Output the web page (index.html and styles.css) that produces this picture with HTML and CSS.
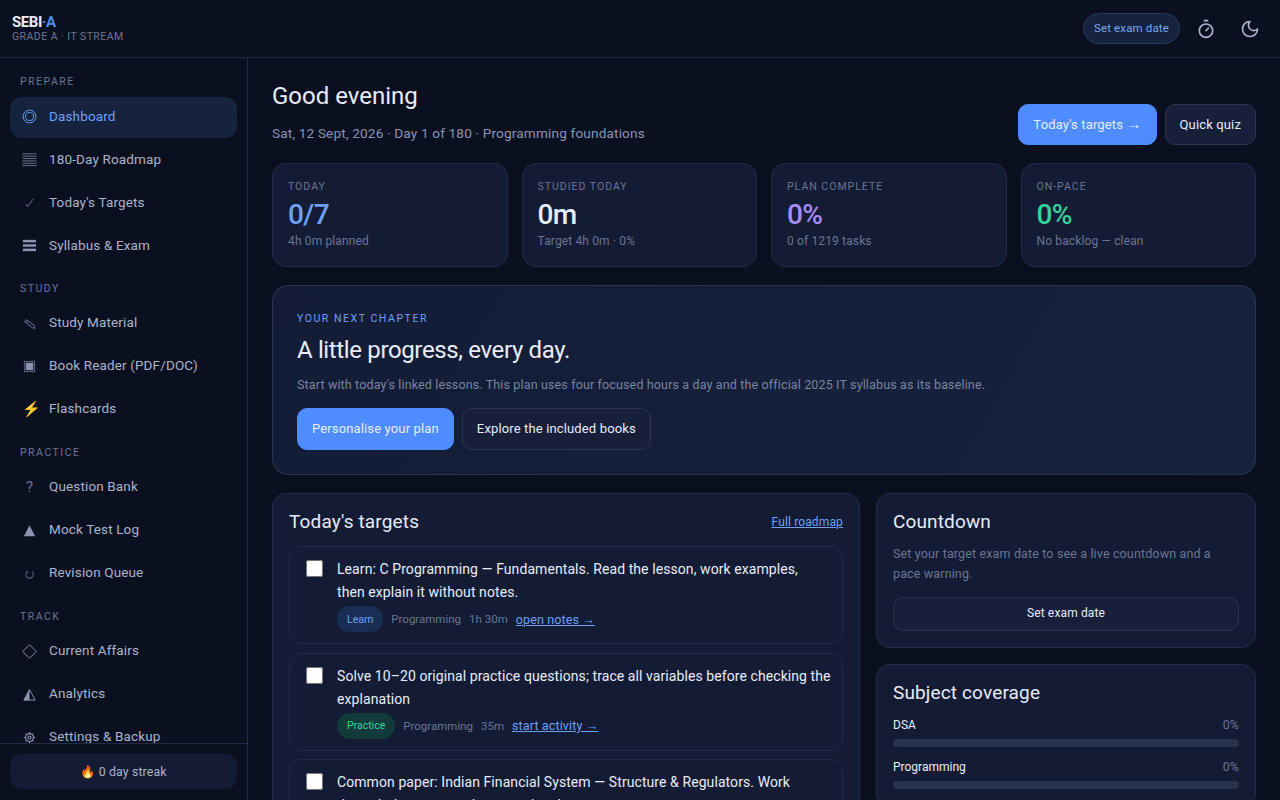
FILE: index.html
```html
<!DOCTYPE html>
<html lang="en">
<head>
  <meta charset="UTF-8" />
  <meta name="viewport" content="width=device-width, initial-scale=1" />
  <title>SEBI-A | Dashboard</title>
  <link rel="stylesheet" href="styles.css">
</head>
<body>
  <header class="topbar">
    <div class="brand">
      <div class="logo">SEBI<span class="logo-dot">·A</span></div>
      <div class="logo-sub">GRADE A · IT STREAM</div>
    </div>
    <div class="topbar-actions">
      <button class="exam-pill">Set exam date</button>
      <button class="icon-btn" aria-label="Timer">
        <svg width="20" height="20" viewBox="0 0 24 24" fill="none" stroke="currentColor" stroke-width="2" stroke-linecap="round" stroke-linejoin="round"><line x1="10" y1="2" x2="14" y2="2"/><line x1="12" y1="14" x2="15" y2="11"/><circle cx="12" cy="14" r="8"/></svg>
      </button>
      <button class="icon-btn" aria-label="Theme">
        <svg width="20" height="20" viewBox="0 0 24 24" fill="none" stroke="currentColor" stroke-width="2" stroke-linecap="round" stroke-linejoin="round"><path d="M12 3a6 6 0 0 0 9 9 9 9 0 1 1-9-9Z"/></svg>
      </button>
    </div>
  </header>

  <div class="shell">
    <aside class="sidebar">
      <nav class="nav">
        <div class="nav-label">PREPARE</div>
        <a class="nav-item active">
          <svg class="nav-icon" viewBox="0 0 16 16" fill="none" stroke="currentColor"><circle cx="8" cy="8" r="6.8"/><circle cx="8" cy="8" r="4.3"/></svg>
          Dashboard
        </a>
        <a class="nav-item">
          <svg class="nav-icon dim" viewBox="0 0 16 16" stroke="currentColor"><path d="M.5 2h15M.5 4.5h15M.5 7h15M.5 9.5h15M.5 12h15M.5 14.5h15"/></svg>
          180-Day Roadmap
        </a>
        <a class="nav-item">
          <svg class="nav-icon dim" viewBox="0 0 16 16" fill="none" stroke="currentColor"><path d="M4 9.5l2 3L12 4"/></svg>
          Today's Targets
        </a>
        <a class="nav-item">
          <svg class="nav-icon" viewBox="0 0 16 16" fill="currentColor"><rect x="1" y="2" width="14" height="2.6"/><rect x="1" y="6.7" width="14" height="2.6"/><rect x="1" y="11.4" width="14" height="2.6"/></svg>
          Syllabus &amp; Exam
        </a>
        <div class="nav-label">STUDY</div>
        <a class="nav-item">
          <svg class="nav-icon faint" viewBox="0 0 16 16" fill="none" stroke="currentColor" stroke-width="1.4"><path d="M3 6l2-2 8 6 1 3-3-.5z"/><path d="M5 7l2-2"/></svg>
          Study Material
        </a>
        <a class="nav-item">
          <svg class="nav-icon" viewBox="0 0 16 16"><rect x="2.5" y="2.5" width="11" height="11" fill="none" stroke="currentColor" stroke-opacity=".7"/><rect x="4" y="4" width="8" height="8" fill="currentColor"/></svg>
          Book Reader (PDF/DOC)
        </a>
        <a class="nav-item">
          <span class="nav-icon emoji">⚡</span>
          Flashcards
        </a>
        <div class="nav-label">PRACTICE</div>
        <a class="nav-item">
          <span class="nav-icon dim">?</span>
          Question Bank
        </a>
        <a class="nav-item">
          <svg class="nav-icon" viewBox="0 0 16 16" fill="currentColor"><path d="M8 2.5L14 14H2z"/></svg>
          Mock Test Log
        </a>
        <a class="nav-item">
          <svg class="nav-icon faint" viewBox="0 0 16 16" fill="none" stroke="currentColor" stroke-width="1.3"><path d="M5 6.5a4 4 0 1 0 5.5-.7"/><path d="M5 4.5v2.5h2.5" stroke-width="1"/></svg>
          Revision Queue
        </a>
        <div class="nav-label">TRACK</div>
        <a class="nav-item">
          <svg class="nav-icon" viewBox="0 0 16 16" fill="none" stroke="currentColor"><path d="M8 .8L15.2 8 8 15.2.8 8z"/></svg>
          Current Affairs
        </a>
        <a class="nav-item">
          <svg class="nav-icon" viewBox="0 0 16 16"><path d="M8 2.5L14 14H2z" fill="none" stroke="currentColor"/><path d="M8 2.5V14H2z" fill="currentColor"/></svg>
          Analytics
        </a>
        <a class="nav-item">
          <svg class="nav-icon" viewBox="0 0 16 16" fill="none" stroke="currentColor" stroke-width="1.2"><circle cx="8" cy="8" r="4.2"/><circle cx="8" cy="8" r="1.6"/><path d="M8 2v1.8M8 12.2V14M2 8h1.8M12.2 8H14M3.8 3.8L5 5M11 11l1.2 1.2M3.8 12.2L5 11M11 5l1.2-1.2"/></svg>
          Settings &amp; Backup
        </a>
      </nav>
      <div class="sidebar-foot">
        <div class="streak">🔥 0 day streak</div>
      </div>
    </aside>

    <main class="main">
      <div class="page-head">
        <div>
          <h1>Good evening</h1>
          <p class="page-sub">Sat, 12 Sept, 2026 · Day 1 of 180 · Programming foundations</p>
        </div>
        <div class="btn-row">
          <button class="btn btn-primary">Today's targets <span class="arrow">→</span></button>
          <button class="btn">Quick quiz</button>
        </div>
      </div>

      <section class="stats">
        <div class="stat">
          <div class="stat-label">TODAY</div>
          <div class="stat-value blue">0/7</div>
          <div class="stat-note">4h 0m planned</div>
        </div>
        <div class="stat">
          <div class="stat-label">STUDIED TODAY</div>
          <div class="stat-value">0m</div>
          <div class="stat-note">Target 4h 0m · 0%</div>
        </div>
        <div class="stat">
          <div class="stat-label">PLAN COMPLETE</div>
          <div class="stat-value purple">0%</div>
          <div class="stat-note">0 of 1219 tasks</div>
        </div>
        <div class="stat">
          <div class="stat-label">ON-PACE</div>
          <div class="stat-value green">0%</div>
          <div class="stat-note">No backlog — clean</div>
        </div>
      </section>

      <section class="hero">
        <div class="hero-kicker">YOUR NEXT CHAPTER</div>
        <h2>A little progress, every day.</h2>
        <p>Start with today's linked lessons. This plan uses four focused hours a day and the official 2025 IT syllabus as its baseline.</p>
        <div class="hero-btns">
          <button class="btn btn-primary">Personalise your plan</button>
          <button class="btn">Explore the included books</button>
        </div>
      </section>

      <div class="columns">
        <section class="card">
          <div class="card-head">
            <h3>Today's targets</h3>
            <a class="link small">Full roadmap</a>
          </div>
          <div class="task">
            <input type="checkbox" />
            <div>
              <div class="task-text">Learn: C Programming — Fundamentals. Read the lesson, work examples,<br>then explain it without notes.</div>
              <div class="task-meta">
                <span class="tag tag-learn">Learn</span><span>Programming</span><span>1h 30m</span><a class="link">open notes →</a>
              </div>
            </div>
          </div>
          <div class="task">
            <input type="checkbox" />
            <div>
              <div class="task-text">Solve 10–20 original practice questions; trace all variables before checking the<br>explanation</div>
              <div class="task-meta">
                <span class="tag tag-practice">Practice</span><span>Programming</span><span>35m</span><a class="link">start activity →</a>
              </div>
            </div>
          </div>
          <div class="task">
            <input type="checkbox" />
            <div>
              <div class="task-text">Common paper: Indian Financial System — Structure &amp; Regulators. Work through the notes and summarise them.</div>
            </div>
          </div>
        </section>

        <div class="side-col">
          <section class="card">
            <h3>Countdown</h3>
            <p class="card-text">Set your target exam date to see a live countdown and a pace warning.</p>
            <button class="btn btn-wide">Set exam date</button>
          </section>
          <section class="card">
            <h3>Subject coverage</h3>
            <div class="cover">
              <div class="cover-row"><span>DSA</span><span class="cover-pct">0%</span></div>
              <div class="bar"></div>
            </div>
            <div class="cover">
              <div class="cover-row"><span>Programming</span><span class="cover-pct">0%</span></div>
              <div class="bar"></div>
            </div>
          </section>
        </div>
      </div>
    </main>
  </div>
</body>
</html>
```

FILE: styles.css
```css
* {
  box-sizing: border-box;
}

html, body {
  height: 100%;
}

body {
  margin: 0;
  background: #0b1020;
  color: #e8ecf8;
  font-family: Roboto, "Liberation Sans", sans-serif;
  font-size: 14px;
  letter-spacing: 0.01em;
  overflow: hidden;
}

button {
  font-family: inherit;
  letter-spacing: inherit;
}

.topbar {
  height: 58px;
  display: flex;
  align-items: center;
  justify-content: space-between;
  padding: 0 10px 0 12px;
  border-bottom: 1px solid #232c47;
}

.logo {
  font-size: 15px;
  font-weight: 700;
  letter-spacing: -0.45px;
  line-height: 15px;
  color: #e8ecf8;
}

.logo-dot {
  color: #4f8cff;
}

.logo-sub {
  font-size: 10.5px;
  letter-spacing: 0.45px;
  line-height: 13px;
  color: #6b7592;
}

.topbar-actions {
  display: flex;
  align-items: center;
  gap: 4px;
}

.exam-pill {
  height: 31px;
  width: 97px;
  padding: 0 0 2px;
  margin-right: 2px;
  background: #16233f;
  border: 1px solid #2a3a60;
  border-radius: 16px;
  color: #7aa7f0;
  font-size: 11.5px;
}

.icon-btn {
  width: 40px;
  height: 32px;
  display: flex;
  align-items: center;
  justify-content: center;
  background: none;
  border: none;
  color: #aab3cc;
  padding: 0;
}

.shell {
  display: flex;
  height: 742px;
}

.sidebar {
  width: 248px;
  flex: none;
  display: flex;
  flex-direction: column;
  border-right: 1px solid #232c47;
}

.nav {
  flex: 1;
  overflow: hidden;
  padding: 17px 10px 0;
}

.nav-label {
  font-size: 10.5px;
  letter-spacing: 1.5px;
  line-height: 14px;
  color: #6b7592;
  padding: 0 10px;
  margin: 14.85px 0 8px;
}

.nav-label:first-child {
  margin-top: 0;
}

.nav-item {
  display: flex;
  align-items: center;
  gap: 12px;
  height: 41px;
  margin-bottom: 2px;
  padding: 0 12px 4px;
  border-radius: 12px;
  color: #aab3cc;
  font-size: 13.5px;
}

.nav-item.active {
  background: #15233f;
  color: #6ea0f5;
}

.nav-icon {
  width: 15px;
  height: 15px;
  flex: none;
  position: relative;
  top: 1px;
  color: #8b94b0;
  text-align: center;
  font-size: 15px;
  line-height: 15px;
}

.nav-item.active .nav-icon {
  color: #6ea0f5;
}

.nav-icon.dim {
  color: #6b7592;
}

.nav-icon.faint {
  color: #4c5573;
}

.nav-icon.emoji {
  color: #f5c542;
}

.sidebar-foot {
  height: 57px;
  flex: none;
  padding: 10px;
  border-top: 1px solid #232c47;
}

.streak {
  height: 35px;
  display: flex;
  align-items: center;
  justify-content: center;
  background: #141c35;
  border-radius: 12px;
  font-size: 12.3px;
  color: #aab3cc;
}

.main {
  flex: 1;
  min-width: 0;
  overflow: hidden;
  padding: 24px;
}

.page-head {
  display: flex;
  align-items: flex-end;
  justify-content: space-between;
  margin-bottom: 18px;
}

h1 {
  margin: 0 0 12px;
  font-size: 24px;
  font-weight: 400;
  letter-spacing: 0;
  line-height: 28px;
}

.page-sub {
  margin: 0 0 1px;
  font-size: 13.65px;
  line-height: 22px;
  color: #8a94b0;
}

.btn-row {
  display: flex;
  gap: 8px;
}

.btn {
  height: 41px;
  padding: 0 14px 1px;
  background: #171f3a;
  border: 1px solid #2b3553;
  border-radius: 10px;
  color: #e8ecf8;
  font-size: 13px;
}

.btn-primary {
  background: #4f8cff;
  border-color: #4f8cff;
}

.arrow {
  font-size: 15px;
  line-height: 1;
}

.stats {
  display: grid;
  grid-template-columns: repeat(4, 1fr);
  gap: 14px;
  margin-bottom: 18px;
}

.stat {
  height: 104px;
  padding: 16px 15px 0;
  background: #141c35;
  border: 1px solid #232c47;
  border-radius: 14px;
}

.stat-label {
  font-size: 10.5px;
  letter-spacing: 1px;
  line-height: 14px;
  color: #6b7592;
}

.stat-value {
  font-size: 28px;
  font-weight: 500;
  letter-spacing: -0.02em;
  line-height: 34px;
  margin-top: 4px;
}

.blue { color: #6ea0f5; }
.purple { color: #a78bfa; }
.green { color: #34d399; }

.stat-note {
  font-size: 12px;
  line-height: 18px;
  color: #6b7592;
}

.hero {
  height: 190px;
  padding: 26px 24px 0;
  background: linear-gradient(120deg, #141c36, #16233f);
  border: 1px solid #2b3553;
  border-radius: 16px;
  margin-bottom: 18px;
}

.hero-kicker {
  font-size: 10.5px;
  letter-spacing: 1.55px;
  line-height: 14px;
  color: #6ea0f5;
}

.hero h2 {
  margin: 8px 0 9px;
  font-size: 24px;
  font-weight: 400;
  letter-spacing: -0.015em;
  line-height: 32px;
}

.hero p {
  margin: 0 0 13px;
  font-size: 12.5px;
  line-height: 20px;
  color: #7a84a0;
}

.hero-btns {
  display: flex;
  gap: 8px;
}

.hero-btns .btn {
  height: 42px;
}

.columns {
  display: grid;
  grid-template-columns: 1fr 380px;
  gap: 16px;
  align-items: start;
}

.side-col {
  display: flex;
  flex-direction: column;
  gap: 16px;
}

.card {
  padding: 16px;
  background: #141c35;
  border: 1px solid #232c47;
  border-radius: 14px;
}

.card-head {
  display: flex;
  align-items: center;
  justify-content: space-between;
  margin-bottom: 12px;
}

h3 {
  margin: 0;
  font-size: 19px;
  font-weight: 400;
  line-height: 24px;
}

.link {
  color: #6ea0f5;
  text-decoration: underline;
}

.small {
  font-size: 12px;
}

.task {
  display: flex;
  gap: 14px;
  padding: 11px 8px 11px 16px;
  margin-bottom: 8.5px;
  border: 1px solid #212a45;
  border-radius: 12px;
}

.task input {
  width: 17px;
  height: 17px;
  margin: 2px 0 0;
  flex: none;
}

.task-text {
  font-size: 14px;
  letter-spacing: 0.08px;
  line-height: 23px;
}

.task-meta {
  display: flex;
  align-items: center;
  gap: 8px;
  margin-top: 2px;
  font-size: 11.5px;
  letter-spacing: 0;
  color: #6b7592;
}

.task-meta .link {
  font-size: 12.5px;
  letter-spacing: 0.01em;
}

.tag {
  height: 26px;
  padding: 0 10px;
  display: flex;
  align-items: center;
  border-radius: 13px;
  font-size: 10.5px;
}

.tag-learn {
  background: #1a2d55;
  color: #6ea0f5;
}

.tag-practice {
  background: #123a3a;
  color: #34d399;
}

.card-text {
  margin: 10px 0 13px;
  font-size: 12.5px;
  line-height: 20px;
  color: #6b7592;
}

.btn-wide {
  width: 100%;
  height: 34px;
  padding-bottom: 2px;
  font-size: 12px;
}

.cover {
  margin-top: 10px;
}

.cover-row {
  display: flex;
  justify-content: space-between;
  font-size: 12px;
  letter-spacing: 0;
  line-height: 20px;
  margin-bottom: 4px;
}

.cover-pct {
  color: #6b7592;
  font-size: 12.5px;
}

.bar {
  height: 8px;
  margin-bottom: 1.7px;
  background: #28324f;
  border-radius: 4px;
}
```
